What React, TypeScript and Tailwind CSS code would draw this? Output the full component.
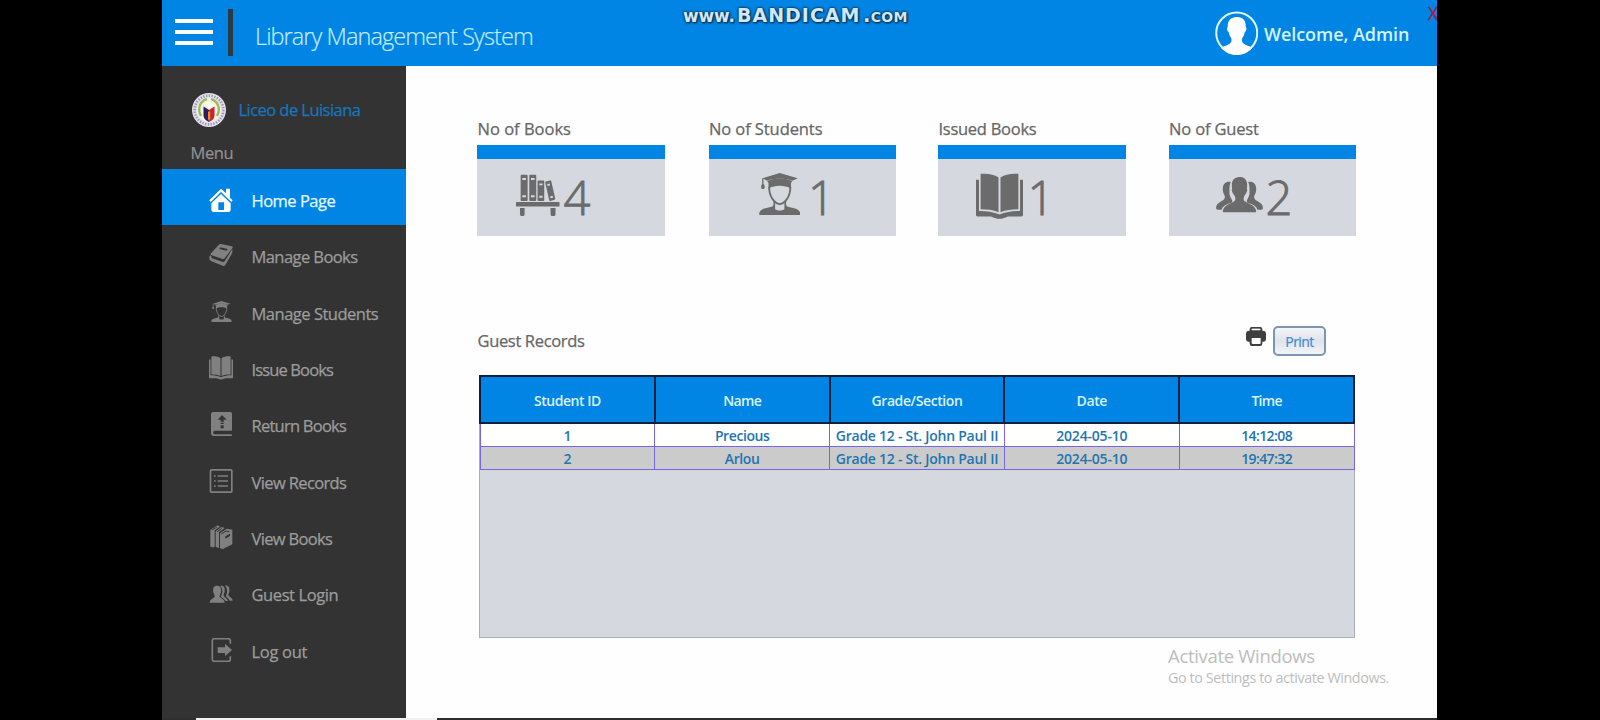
import type { ReactNode } from "react";

function StudentIcon({ className }: { className: string }) {
  return (
    <svg viewBox="0 0 124 128" className={className} fill="currentColor">
      <path d="M10 16 62 0l54 16-16 7c-24-8-52-8-76 0z" />
      <path d="M24 24c24-10 52-10 76 0l-4 5v18c-20-11-48-11-68 0V29z" />
      <path d="M9 16h4v17c5 4 5 12 1 15H8c-3-3-3-11 1-15z" />
      <path d="M30 42c0 27 14 49 32 52 18-3 32-25 32-52" fill="none" stroke="currentColor" strokeWidth="5.500" />
      <path d="M42 84c2 7 2 13-2 17l-27 7C5 111 0 118 0 123c0 3 2 5 5 5h114c3 0 5-2 5-5 0-5-5-12-13-15l-27-7c-4-4-4-10-2-17l-6 5v20c-8 5-20 5-28 0V89z" />
    </svg>
  );
}

function OpenBookIcon({ className }: { className: string }) {
  return (
    <svg viewBox="0 0 142 138" className={className} fill="currentColor">
      <path d="M14 2c20-2 40 1 54 11v105c-16-7-34-9-54-9z" />
      <path d="M128 2c-20-2-40 1-54 11v105c16-7 34-9 54-9z" />
      <path d="M0 20h9v94c24 0 44 3 62 11 18-8 38-11 62-11V20h9v106c0 4-2 5-5 5h-37c-8 0-15 7-29 7s-21-7-29-7H5c-3 0-5-1-5-5z" />
    </svg>
  );
}

function ShelfIcon() {
  return (
    <svg viewBox="0 0 131 126" className="h-[42px] w-[43.5px]" fill="currentColor">
      <path fillRule="evenodd" d="M17 2h15q3 0 3 3v73q0 3-3 3H17q-3 0-3-3V5q0-3 3-3zm2 10v6h11v-6zm0 52v6h11v-6z" />
      <path fillRule="evenodd" d="M43 2h15q3 0 3 3v73q0 3-3 3H43q-3 0-3-3V5q0-3 3-3zm2 10v6h11v-6zm0 52v6h11v-6z" />
      <path fillRule="evenodd" d="M68 19h14q3 0 3 3v56q0 3-3 3H68q-3 0-3-3V22q0-3 3-3zm2 9v6h10v-6zm0 37v6h10v-6z" />
      <path fillRule="evenodd" d="m90 22 12-3q3-1 4 2l12 52q1 3-2 4l-12 4q-3 1-4-2L88 26q-1-3 2-4zm4 8 1 6 8-2-2-6zm9 37 1 6 8-2-2-6z" />
      <path d="M2 84h127q2 0 2 2v10q0 2-2 2H2q-2 0-2-2V86q0-2 2-2z" />
      <path d="M12 102h14v18q0 6-4 6h-6q-4 0-4-6zM104 102h15v18q0 6-4 6h-7q-4 0-4-6z" />
    </svg>
  );
}

function GuestsIcon() {
  return (
    <svg viewBox="0 0 140 108" className="h-[36px] w-[47px]" fill="currentColor">
      <path d="M44 15c-13-4-25 5-24 22 0 4 0 5 1 8 1 6 4 9 5 13 1 10-4 11-14 17C3 80-1 87 0 94c0 3 2 4 5 4h11c4-10 12-15 26-19 7-3 8-6 4-13-4-6-7-14-6-19 0-12-1-22 4-32z" />
      <path d="M96 15c13-4 25 5 24 22 0 4 0 5-1 8-1 6-4 9-5 13-1 10 4 11 14 17 9 5 13 12 12 19 0 3-2 4-5 4h-11c-4-10-12-15-26-19-7-3-8-6-4-13 4-6 7-14 6-19 0-12 1-22-4-32z" />
      <path d="M70 0c15-1 23 9 23 24 0 5 0 7-1 11 2 2 2 7-3 15-3 4-5 7-6 11-2 8 1 12 10 16 14 5 25 12 27 25 0 3-1 4-4 4H24c-3 0-4-1-4-4 2-13 13-20 27-25 9-4 12-8 10-16-1-4-3-7-6-11-5-8-5-13-3-15-1-4-1-6-1-11C47 9 55 1 70 0z" />
    </svg>
  );
}

const nav: { label: string; tracking: string; icon: ReactNode }[] = [
  {
    label: "Home Page",
    tracking: "tracking-[-0.5px]",
    icon: (
      <svg viewBox="0 0 72 72" className="h-6 w-6" fill="currentColor">
        <path d="M36 2 1 37l4 5 31-30 31 30 4-5-8-8V2H51v14z" />
        <path fillRule="evenodd" d="M36 18 7 46v18q0 8 7 8h44q7 0 7-8V46zM28 43h17v23H28z" />
      </svg>
    ),
  },
  {
    label: "Manage Books",
    tracking: "tracking-[-0.57px]",
    icon: (
      <svg viewBox="0 0 72 72" className="h-6 w-6" fill="currentColor">
        <path fillRule="evenodd" d="M31 4q2-2 5-1l32 7q5 1 2 6L47 46q-2 3-6 2L8 37q-5-2-2-6zm3 9-3 5 22 5 3-5z" />
        <path d="M4 37C-1 43 0 51 6 54l35 14q5 2 8-2l21-37V18L47 55q-2 3-5 2L9 46q-4-2-1-6z" />
      </svg>
    ),
  },
  { label: "Manage Students", tracking: "tracking-[-0.49px]", icon: <StudentIcon className="h-[21px] w-[21px]" /> },
  { label: "Issue Books", tracking: "tracking-[-0.87px]", icon: <OpenBookIcon className="h-[23.5px] w-6" /> },
  {
    label: "Return Books",
    tracking: "tracking-[-0.75px]",
    icon: (
      <svg viewBox="0 0 72 72" className="h-6 w-6" fill="currentColor">
        <path fillRule="evenodd" d="M13 0h51q5 0 5 5v49q0 2-2 2H17c-6 0-6 11 0 11h50q2 0 2 2v1q0 2-2 2H16Q6 72 6 62V7q0-7 7-7zm26 9L26 23h9v6h9v-6h9zM35 32v4h9v-4zm0 8v9h9v-9z" />
      </svg>
    ),
  },
  {
    label: "View Records",
    tracking: "tracking-[-0.63px]",
    icon: (
      <svg viewBox="0 0 72 72" className="h-6 w-6" fill="none" stroke="currentColor" strokeWidth="5">
        <rect x="4.5" y="2.5" width="64" height="67" rx="3" />
        <path d="M26 21h31M26 36h31M26 51h31M15 21h5M15 36h5M15 51h5" />
      </svg>
    ),
  },
  {
    label: "View Books",
    tracking: "tracking-[-0.67px]",
    icon: (
      <svg viewBox="0 0 72 72" className="h-6 w-6" fill="currentColor">
        <path fillRule="evenodd" d="M4 15 26 1l7 4-16 11v49q-4 4-12 0-1-1-1-2zm6 1 16-10-3-1-15 9z" />
        <path d="M20 19 38 6l9 3-17 13v47q-5-1-10-4z" />
        <path fillRule="evenodd" d="m33 25 20-14 17 3v44L46 70q-5 4-13-1zm16 9v7l14-8v-7z" />
        <path d="m25 20 13-9M37 27l14-9 10 2" stroke="#333" strokeWidth="3" fill="none" />
      </svg>
    ),
  },
  {
    label: "Guest Login",
    tracking: "tracking-[-0.41px]",
    icon: (
      <svg viewBox="0 0 72 72" className="h-6 w-6" fill="currentColor">
        <path d="M24 14c10 0 14 8 12 19 0 5-5 9-4 14 2 5 14 6 15 18H2c1-12 13-13 15-18 1-5-4-9-4-14-2-11 1-19 11-19z" />
        <path d="M33 15c9-3 16 4 14 16 0 5-4 9-3 13 2 5 11 8 13 16h-8c-3-7-10-9-13-13 0-5 4-8 4-14 1-7-2-15-7-18z" />
        <path d="M48 14c10-2 15 5 13 17 0 5-4 8-3 12 2 5 12 7 13 16h-9c-3-7-9-9-11-13 0-5 3-7 3-13 1-8-1-15-6-19z" />
      </svg>
    ),
  },
  {
    label: "Log out",
    tracking: "tracking-[-0.3px]",
    icon: (
      <svg viewBox="0 0 72 72" className="h-6 w-6">
        <path d="M64 17V8q0-6-6-6H16q-6 0-6 6v56q0 6 6 6h42q6 0 6-6v-9" fill="none" stroke="currentColor" strokeWidth="5" />
        <path d="M26 28h22V17l21 19-21 19V45H26z" fill="currentColor" />
      </svg>
    ),
  },
];

const stats: { label: string; value: string; tracking: string; card: string; inner: string; gap: string; icon: ReactNode }[] = [
  { label: "No of Books", value: "4", tracking: "tracking-normal", card: "ml-0", inner: "pl-[39px]", gap: "ml-[4px]", icon: <ShelfIcon /> },
  { label: "No of Students", value: "1", tracking: "tracking-[-0.09px]", card: "ml-[44px]", inner: "pl-[50px]", gap: "ml-[8px]", icon: <StudentIcon className="mb-px h-[42.5px] w-[41.5px]" /> },
  { label: "Issued Books", value: "1", tracking: "tracking-[-0.27px]", card: "ml-[42px]", inner: "pl-[37.5px]", gap: "ml-[5px]", icon: <OpenBookIcon className="mt-[3px] h-[46px] w-[47px]" /> },
  { label: "No of Guest", value: "2", tracking: "tracking-[-0.16px]", card: "ml-[43px]", inner: "pl-[47px]", gap: "ml-[3px]", icon: <GuestsIcon /> },
];

const columns = [
  { label: "Student ID", tracking: "tracking-[-0.45px]" },
  { label: "Name", tracking: "tracking-[-0.6px]" },
  { label: "Grade/Section", tracking: "tracking-[-0.4px]" },
  { label: "Date", tracking: "tracking-[-0.4px]" },
  { label: "Time", tracking: "tracking-[-0.7px]" },
];

const rows = [
  ["1", "Precious", "Grade 12 - St. John Paul II", "2024-05-10", "14:12:08"],
  ["2", "Arlou", "Grade 12 - St. John Paul II", "2024-05-10", "19:47:32"],
];

const cellTracking = [
  "tracking-normal",
  "tracking-[-0.4px]",
  "tracking-[-0.25px]",
  "tracking-[-0.2px]",
  "tracking-[-0.6px]",
];

function Seal() {
  return (
    <svg viewBox="0 0 34 34" className="h-[34px] w-[34px]">
      <circle cx="17" cy="17" r="17" fill="#e4e2ea" />
      <circle cx="17" cy="17" r="14.4" fill="none" stroke="#9a8fb4" strokeWidth="2.600" strokeDasharray="1.3 1.5" />
      <circle cx="17" cy="17" r="12" fill="#f4f3e6" />
      <path d="M9 23C5 16 8 8 15 6M25 23c4-7 1-15-6-17" fill="none" stroke="#9dbb5e" strokeWidth="2.4" />
      <path d="M11.5 13.500 17 17v12c-4-2-5.500-4-5.500-7z" fill="#2b1d5e" />
      <path d="M22.500 13.500 17 17v12c4-2 5.500-4 5.500-7z" fill="#c8232f" />
      <path d="M16 18.500h2.200v7L17 28l-1-2z" fill="#f08a2c" />
      <path d="M12 12.500q3 0 5 3 2-3 5-3-1-3-5-3t-5 3z" fill="#fffbe8" />
    </svg>
  );
}

export default function App() {
  return (
    <div className="flex h-[720px] w-[1600px] justify-start overflow-hidden bg-black pl-[162px] font-['Open_Sans',sans-serif]">
      <div className="relative flex w-[1275px] flex-col overflow-hidden bg-[#fefefe]">
        <header className="flex h-[66px] shrink-0 items-start bg-[#0085e4]">
          <div className="ml-[13px] mt-[19px] flex w-[38px] flex-col gap-[7px]">
            <span className="h-[4px] bg-white" />
            <span className="h-[4px] bg-white" />
            <span className="h-[4px] bg-white" />
          </div>
          <span className="ml-[15px] mt-[9px] h-[47px] w-[5px] bg-[#2a3946]" />
          <h1 className="ml-[22px] mt-[21px] text-[23.5px] leading-[31px] font-light tracking-[-0.92px] whitespace-nowrap text-[#c3ecff] [-webkit-text-stroke:0.2px]">
            Library Management System
          </h1>
          <svg viewBox="0 0 130 132" className="ml-auto mt-[11px] h-[44px] w-[43.500px]">
            <circle cx="65" cy="66" r="61.500" fill="none" stroke="#dff6ff" strokeWidth="6" />
            <path d="M65 18c17-1 28 10 27 29 3 3 3 12-3 17-2 9-5 14-8 18v10c5 10 20 11 31 18-12 14-28 22-47 22s-35-8-47-22c11-7 26-8 31-18V82c-3-4-6-9-8-18-6-5-6-14-3-17-1-19 10-28 27-29z" fill="#fff" />
          </svg>
          <span className="ml-[6px] mt-[22px] w-[146px] text-[18px] leading-[25px] font-semibold tracking-[-0.06px] whitespace-nowrap text-[#d5f3ff]">
            Welcome, Admin
          </span>
          <span className="ml-[18px] mt-[3px] w-[9px] text-[18px] leading-[20px] text-[#a02050] [-webkit-text-stroke:0.4px]">X</span>
        </header>

        <div className="flex min-h-0 flex-1">
          <aside className="flex w-[244px] shrink-0 flex-col bg-[#333]">
            <div className="mt-[27px] flex h-[34px] items-center pl-[30px]">
              <Seal />
              <span className="ml-[12.500px] text-[16.5px] leading-[22px] tracking-[-0.55px] whitespace-nowrap text-[#1577bd] [-webkit-text-stroke:0.25px]">
                Liceo de Luisiana
              </span>
            </div>
            <p className="mt-[15px] pl-[28.500px] text-[16.5px] leading-[22px] tracking-[-0.41px] text-[#929292] [-webkit-text-stroke:0.2px]">Menu</p>
            <nav className="mt-[4.500px] flex flex-col">
              {nav.map((item, i) => (
                <a
                  key={item.label}
                  className={`flex h-[56.300px] items-center pl-[47px] ${i === 0 ? "bg-[#0085e4] text-white" : "text-[#808080]"}`}
                >
                  <span className={`flex w-6 justify-center ${i === 0 ? "pt-[7px]" : "pt-[5px]"}`}>{item.icon}</span>
                  <span
                    className={`ml-[18.500px] pt-[9px] text-[16.5px] leading-[22px] whitespace-nowrap [-webkit-text-stroke:0.25px] ${item.tracking} ${i === 0 ? "text-[#e6f8ff]" : "text-[#9c9c9c]"}`}
                  >
                    {item.label}
                  </span>
                </a>
              ))}
            </nav>
          </aside>

          <main className="flex flex-1 flex-col pl-[71px]">
            <section className="mt-[52px] flex">
              {stats.map((s) => (
                <div key={s.label} className={`w-[187.500px] ${s.card}`}>
                  <p className={`h-[27px] pl-[0.500px] text-[16.5px] leading-[22px] whitespace-nowrap text-[#666] [-webkit-text-stroke:0.25px] ${s.tracking}`}>{s.label}</p>
                  <div className="h-[14px] bg-[#0085e4]" />
                  <div className={`flex h-[77px] items-center bg-[#d5d8df] pb-[6px] text-[#6b6b6b] ${s.inner}`}>
                    {s.icon}
                    <span className={`pt-[4px] text-[47px] leading-[60px] font-light [-webkit-text-stroke:0.9px] ${s.gap}`}>{s.value}</span>
                  </div>
                </div>
              ))}
            </section>

            <section className="mt-[90px] flex h-[30px] w-[849px] items-start">
              <h2 className="mt-[4px] pl-[0.500px] text-[16.5px] leading-[22px] tracking-[-0.34px] text-[#666] [-webkit-text-stroke:0.25px]">Guest Records</h2>
              <svg viewBox="0 0 60 57" className="ml-auto mt-[1px] h-[19px] w-5" fill="#3f3f3f">
                <path d="M17 0h26q6 0 6 6v6H11V6q0-6 6-6z" />
                <path d="M17 5h26v5H17z" fill="#fff" />
                <path d="M9 11h42q9 0 9 10v16q0 7-7 7h-4v6q0 7-7 7H18q-7 0-7-7v-6H7q-7 0-7-7V21Q0 11 9 11z" />
                <path d="M17 33h27v15q0 3-3 3H20q-3 0-3-3z" fill="#fff" />
              </svg>
              <button className="ml-[7.500px] h-[30px] w-[53px] rounded-[5px] border-2 border-[#7c95b0] bg-linear-to-b from-[#f4f5f8] via-[#dfe3ea] to-[#f1f4f8] pt-[2px] text-[14px] leading-[20px] tracking-[-0.600px] text-[#3f8bd0] [-webkit-text-stroke:0.2px]">
                Print
              </button>
            </section>

            <section className="mt-[19px] ml-[2px] h-[263px] w-[876px] border border-[#a9adb8] bg-[#d5d8df]">
              <table className="-mt-px -ml-px w-[876px] table-fixed border-collapse text-center text-[14px] font-semibold">
                <thead>
                  <tr className="h-[46.500px] bg-[#0085e4] text-[#d9f4ff]">
                    {columns.map((c) => (
                      <th key={c.label} className={`border-2 border-[#0c1f3c] p-0 pt-[3px] leading-[20px] font-semibold ${c.tracking}`}>
                        {c.label}
                      </th>
                    ))}
                  </tr>
                </thead>
                <tbody>
                  {rows.map((r, i) => (
                    <tr key={r[0]} className={`h-[23.500px] ${i === 0 ? "bg-white" : "bg-[#cbcbcb]"}`}>
                      {r.map((v, j) => (
                        <td
                          key={j}
                          className={`border border-[#7566e6] p-0 pt-[2px] leading-[20px] whitespace-nowrap text-[#2474b0] ${cellTracking[j]}`}
                        >
                          {v}
                        </td>
                      ))}
                    </tr>
                  ))}
                </tbody>
              </table>
            </section>
          </main>
        </div>

        <div className="flex h-[2px] shrink-0 bg-[#2e2e2e]">
          <span className="ml-[34px] h-[2px] w-[241px] bg-[#f2f2f2]" />
        </div>

        <div className="absolute top-[3px] left-[521px] flex items-baseline font-['DejaVu_Sans','Open_Sans',sans-serif] text-[#cfe8fa] [text-shadow:0_0_2px_#0b2b4a,0_0_3px_#0b2b4a,1px_1px_2px_#0b2b4a]">
          <span className="w-[54px] text-[17px] leading-[24px] font-bold tracking-[-0.200px]">www.</span>
          <span className="w-[126px] text-[19px] leading-[24px] font-bold tracking-[1px]">BANDICAM</span>
          <span className="text-[19.500px] leading-[24px] font-bold tracking-[0.300px] [font-variant-caps:small-caps]">.com</span>
        </div>

        <div className="absolute top-[643px] left-[1006px] whitespace-nowrap text-[#bdbdbd]">
          <p className="text-[18.5px] leading-[26px] tracking-[-0.31px]">Activate Windows</p>
          <p className="-mt-[1px] text-[14.300px] leading-[20px] tracking-[-0.38px]">Go to Settings to activate Windows.</p>
        </div>
      </div>
    </div>
  );
}
